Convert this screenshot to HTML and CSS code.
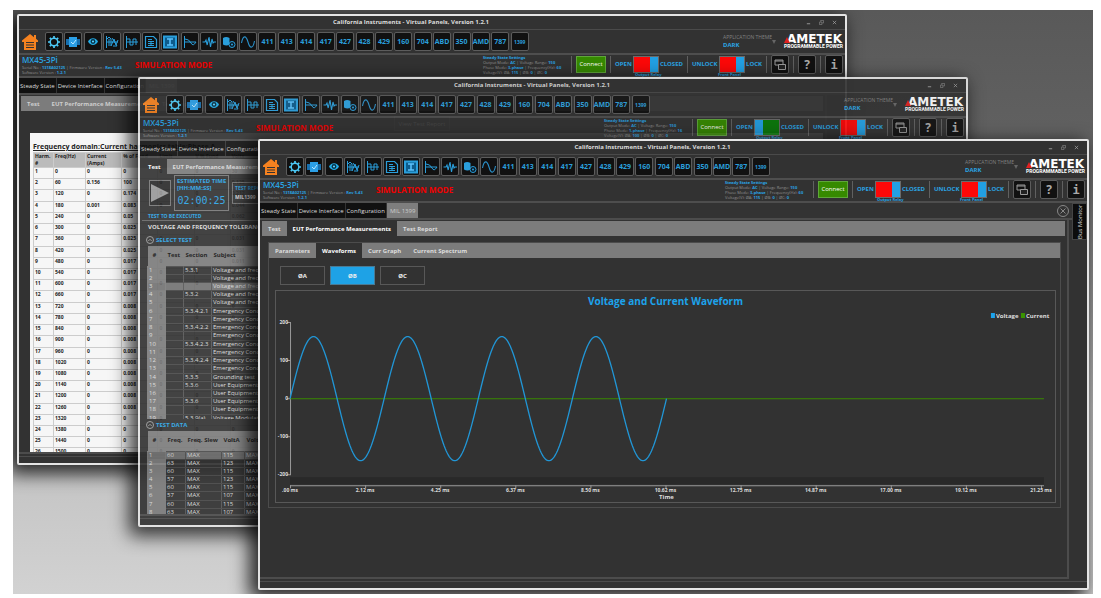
FILE: index.html
```html
<!DOCTYPE html>
<html lang="en">
<head>
  <meta charset="UTF-8">
  <meta name="viewport" content="width=device-width, initial-scale=1.0">
  <title>California Instruments - Virtual Panels</title>
  <link rel="stylesheet" href="styles.css">
</head>
<body>
  <!-- Icons -->
  <svg class="sprite" xmlns="http://www.w3.org/2000/svg">
    <symbol id="i-home" viewBox="0 0 18 18"><path d="M9 1 1 7.500V9h2v8h12V9h2V7.500L15 5.800V2h-2v2.200z" fill="#f58220"/><path d="M5 9.500h8M5 12h8M5 14.500h8" stroke="#333" stroke-width="1"/></symbol>
    <symbol id="i-gear" viewBox="0 0 16 16"><circle cx="8" cy="8" r="3.800" fill="none" stroke="#4cc8f5" stroke-width="1.500"/><path d="M8 2v2M8 12v2M2 8h2M12 8h2M3.800 3.800l1.400 1.400M10.800 10.800l1.400 1.400M12.200 3.800l-1.400 1.400M5.200 10.800l-1.400 1.400" stroke="#4cc8f5" stroke-width="1.700"/></symbol>
    <symbol id="i-chip" viewBox="0 0 16 16"><path d="M1 5h14v6H1z" fill="#176fae"/><path d="M4 3h8v10H4z" fill="#2b9fe6"/><path d="M6 8l2 2 3-4" fill="none" stroke="#b8e6ff"/></symbol>
    <symbol id="i-eye" viewBox="0 0 16 16"><path d="M3 7.500C5 3 11 3 13 7.500 11 12 5 12 3 7.500z" fill="#25aee8"/><circle cx="8" cy="7.500" r="2.400" fill="#073246"/><circle cx="8" cy="7.500" r="1.100" fill="#5ad0ff"/></symbol>
    <symbol id="i-multi" viewBox="0 0 16 16"><path d="M2.500 2v12M2 8h12M3 5l2-2 2 2v7l3-7 2 6 2-5M5 12V5M8 4l5 8M9 12h4" fill="none" stroke="#2a9fdc"/></symbol>
    <symbol id="i-step" viewBox="0 0 16 16"><path d="M2.500 2v12M2 8h12M3 5h3v6h3V5h3v6" fill="none" stroke="#2a9fdc"/></symbol>
    <symbol id="i-doc" viewBox="0 0 16 16"><path d="M2.500 2.500h8l3 3v8h-11z" fill="none" stroke="#2a9fdc" stroke-width="1.200"/><path d="M5 5.500h4M5 7.500h6M5 9.500h6M5 11.500h6M8 7v5" stroke="#2a9fdc"/></symbol>
    <symbol id="i-beam" viewBox="0 0 16 16"><path d="M2 2.500h12v11H2z" fill="#0d5c8c" stroke="#2a9fdc" stroke-width="2"/><path d="M5 5h6M8 5v6M5 11h6" stroke="#5cc4ff" stroke-width="1.500"/></symbol>
    <symbol id="i-decay" viewBox="0 0 16 16"><path d="M2.500 2v12M2 8h12M3 5q4 0 6 4t5-1" fill="none" stroke="#2a9fdc"/></symbol>
    <symbol id="i-pulse" viewBox="0 0 16 16"><path d="M1.500 8H4l1-2 1.200 5L8 3l1.500 10L11 5l1 4 1-1h2" fill="none" stroke="#2a9fdc" stroke-width="1.100"/></symbol>
    <symbol id="i-data" viewBox="0 0 16 16"><path d="M2 4q3-2 6.500 0v6.500q-3 2-6.500 0z" fill="#2a9fdc"/><circle cx="11" cy="10.500" r="3" fill="#0a1a24" stroke="#2a9fdc"/><circle cx="11" cy="10.500" r="1" fill="#2a9fdc"/></symbol>
    <symbol id="i-sine" viewBox="0 0 16 16"><path d="M1.500 9C3 1 6 1 8 8s5 7 6.500-1" fill="none" stroke="#2a8fc8" stroke-width="1.100"/></symbol>
    <symbol id="i-windows" viewBox="0 0 16 16"><path d="M3 3h8v5H3zM3 4h8" fill="none" stroke="#999"/><path d="M6.500 7.500h7v5h-7z" fill="#222" stroke="#999"/></symbol>
  </svg>

  <!-- Header shared by every panel window -->
  <template id="windowHeader">
    <div class="title-bar">
      <span class="title">California Instruments - Virtual Panels, Version 1.2.1</span>
      <div class="window-buttons">
        <button aria-label="Minimize"><svg viewBox="0 0 6 6"><path d="M1 4.500h4" stroke="#aaa"/></svg></button>
        <button aria-label="Restore"><svg viewBox="0 0 6 6"><path d="M.5 2.500h3v3h-3zM2 2V.5h3.500v3H4" fill="none" stroke="#888" stroke-width=".8"/></svg></button>
        <button aria-label="Close"><svg viewBox="0 0 6 6"><path d="M1 1l4 4M5 1L1 5" stroke="#aaa" stroke-width=".8"/></svg></button>
      </div>
    </div>
    <div class="toolbar">
      <a href="#" class="home" aria-label="Home"><svg><use href="#i-home"/></svg></a>
      <div class="tools"></div>
      <label class="theme">APPLICATION THEME
        <select><option>DARK</option></select>
      </label>
      <svg class="caret" viewBox="0 0 6 6"><path d="M1 1h4L3 5z" fill="#666"/></svg>
      <div class="logo">
        <svg viewBox="0 0 6 8"><path d="M0 8l3-6 3 6z" fill="#e02020"/></svg>
        <b>AMETEK</b>
        <span>PROGRAMMABLE POWER</span>
      </div>
    </div>
    <div class="status">
      <div class="device">
        <strong>MX45-3Pi</strong>
        <p>Serial No : <b>1318A02125</b> | Firmware Version : <b>Rev 5.43</b></p>
        <p>Software Version : <b>1.2.1</b></p>
      </div>
      <div class="mode">SIMULATION MODE</div>
      <div class="settings">
        <p><b>Steady State Settings</b></p>
        <p>Output Mode: <b>AC</b> | Voltage Range: <b>150</b></p>
        <p>Phase Mode: <b class="phase"></b> | Frequency(Hz): <b class="freq"></b></p>
        <p>Voltage(V): ØA: <b class="volt"></b> | ØB: <b>0</b> | ØC: <b>0</b></p>
      </div>
      <i class="sep"></i>
      <button class="connect">Connect</button>
      <i class="sep"></i>
      <label class="switch"><span>OPEN</span><input type="checkbox" class="relay" checked><span>CLOSED</span><small>Output Relay</small></label>
      <i class="sep"></i>
      <label class="switch lock"><span>UNLOCK</span><input type="checkbox" checked><span>LOCK</span><small>Front Panel</small></label>
      <i class="sep"></i>
      <button class="tool" aria-label="Windows"><svg><use href="#i-windows"/></svg></button>
      <i class="sep"></i>
      <button class="tool help">?</button>
      <i class="sep"></i>
      <button class="tool help info">i</button>
    </div>
  </template>

  <main class="desktop">
    <!-- Test report window -->
    <section class="window report-window" data-phase="3-phase" data-freq="60" data-volt="115" data-relay="closed">
      <div class="main-tabs">
        <button>Steady State</button><button>Device Interface</button><button>Configuration</button><button class="active">MIL 1399</button>
      </div>
      <div class="body">
        <div class="panel">
          <div class="tabs plain"><button>Test</button><button>EUT Performance Measurements</button><button>Test Report</button></div>
          <div class="view-row"><button>View Test Report</button></div>
          <div class="report">
            <h2>Frequency domain:Current harmonics table:Phase A</h2>
            <table id="harmonics">
              <thead><tr><th>Harm.<br>#</th><th>Freq(Hz)</th><th>Current<br>(Amps)</th><th>% of Fund</th><th>Limit</th><th>V % Fund</th><th>Volts</th></tr></thead>
              <tbody></tbody>
            </table>
          </div>
        </div>
      </div>
    </section>

    <!-- Test selection window -->
    <section class="window test-window" data-phase="1-phase" data-freq="16" data-volt="100" data-relay="open">
      <div class="main-tabs">
        <button>Steady State</button><button>Device Interface</button><button>Configuration</button><button class="active">MIL 1399</button>
      </div>
      <div class="body">
        <div class="panel">
          <div class="tabs"><button class="active">Test</button><button>EUT Performance Measurements</button><button>Test Report</button></div>
          <div class="run-row">
            <button class="play" aria-label="Run test"><svg viewBox="0 0 18 18"><path d="M0 0l18 9-18 9z" fill="#999"/></svg></button>
            <div class="estimate">
              <p>ESTIMATED TIME<br>[HH:MM:SS]</p>
              <time>02:00:25</time>
            </div>
            <label class="report-name">TEST REPORT NAME <input type="text" value="MIL1399"></label>
          </div>
          <p class="caption">TEST TO BE EXECUTED</p>
          <p class="test-name">VOLTAGE AND FREQUENCY TOLERANCE</p>
          <h3><button aria-label="Collapse"><svg viewBox="0 0 8 8"><circle cx="4" cy="4" r="3.500"/><path d="M2.300 5L4 3.300 5.700 5"/></svg></button>SELECT TEST</h3>
          <div class="scroll select-scroll">
            <table id="tests">
              <thead><tr><th>#</th><th>Test</th><th>Section</th><th>Subject</th></tr></thead>
              <tbody></tbody>
            </table>
          </div>
          <h3><button aria-label="Collapse"><svg viewBox="0 0 8 8"><circle cx="4" cy="4" r="3.500"/><path d="M2.300 5L4 3.300 5.700 5"/></svg></button>TEST DATA</h3>
          <div class="scroll data-scroll">
            <table id="testData">
              <thead><tr><th>#</th><th>Freq.</th><th>Freq. Slew</th><th>VoltA</th><th>Volt Slew</th></tr></thead>
              <tbody></tbody>
            </table>
          </div>
        </div>
      </div>
    </section>

    <!-- Waveform window -->
    <section class="window wave-window" data-phase="3-phase" data-freq="60" data-volt="115" data-relay="closed">
      <div class="main-tabs">
        <button>Steady State</button><button>Device Interface</button><button>Configuration</button><button class="active">MIL 1399</button>
        <button class="close-tab" aria-label="Close tab"><svg viewBox="0 0 12 12"><circle cx="6" cy="6" r="5.500"/><path d="M3.500 3.500l5 5M8.500 3.500l-5 5"/></svg></button>
      </div>
      <div class="body">
        <div class="panel">
          <div class="tabs"><button>Test</button><button class="active">EUT Performance Measurements</button><button>Test Report</button></div>
          <div class="measure">
            <div class="tabs"><button>Parameters</button><button class="active">Waveforms</button><button>Curr Graph</button><button>Current Spectrum</button></div>
            <div class="phases"><button>ØA</button><button class="active">ØB</button><button>ØC</button></div>
            <div class="chart">
              <svg id="chart" viewBox="0 0 778 211">
                <text class="chart-title" x="389" y="14">Voltage and Current Waveform</text>
                <g class="legend">
                  <rect x="714" y="22" width="4" height="5" fill="#1ca3ec"/><text x="719" y="27">Voltage</text>
                  <rect x="744" y="22" width="4" height="5" fill="#3a9400"/><text x="749" y="27">Current</text>
                </g>
                <rect x="14" y="186" width="753" height="7" fill="#292929"/>
                <g id="axes"></g>
                <path class="current" d="M14 107.500H767"/>
                <path class="voltage" id="voltage"/>
                <text class="axis-title" x="390" y="208">Time</text>
              </svg>
            </div>
          </div>
        </div>
      </div>
      <button class="bus-monitor">Bus Monitor</button>
    </section>
  </main>

  <script src="script.js"></script>
</body>
</html>
```

FILE: styles.css
```css
* {
  box-sizing: border-box;
}
body {
  margin: 0;
  background: #fff;
  color: #ddd;
  font-family: "Open Sans", "Noto Sans", sans-serif;
  font-size: 6px;
  line-height: 8px;
}
button, input, select {
  font: inherit;
  color: inherit;
  margin: 0;
  padding: 0;
  border: none;
  background: none;
}
p, h2, h3 {
  margin: 0;
}
.sprite {
  display: none;
}
.desktop {
  position: relative;
  height: calc(100vh - 14px);
  min-height: 400px;
  margin: 10px 8px 4px 13px;
  overflow: hidden;
  background: linear-gradient(#595959, #606060 20%, #8c8c8c 42%, #bdbdbd 68%, #d2d2d2);
}
/* Windows */
.window {
  position: absolute;
  display: flex;
  flex-direction: column;
  background: #323232;
  border: 2px solid #e4e4e4;
  border-radius: 2px;
  box-shadow: -6px 6px 18px 3px rgba(0, 0, 0, 0.8);
  overflow: hidden;
}
.report-window {
  inset: 4px 246px 129px 4px;
}
.test-window {
  inset: 67px 125px 67px 125px;
  opacity: 0.91;
}
.wave-window {
  inset: 129px 4px 4px 245px;
}
.title-bar {
  display: flex;
  justify-content: center;
  position: relative;
  height: 14px;
  padding: 2px 42px 0 0;
  border-bottom: 1px solid #4a4a4a;
  font-weight: bold;
}
.window-buttons {
  position: absolute;
  right: 8px;
  top: 4px;
  display: flex;
  gap: 8px;
}
.window-buttons button, .window-buttons svg {
  display: block;
  width: 5px;
  height: 5px;
}
.toolbar {
  display: flex;
  align-items: center;
  height: 25px;
  padding-right: 1px;
  border-bottom: 2px solid #4e4e4e;
}
.home {
  margin: 0 6px 0 2px;
}
.home svg {
  display: block;
  width: 18px;
  height: 18px;
}
.tools {
  display: flex;
  justify-content: space-between;
  width: 484px;
}
.tool {
  display: flex;
  align-items: center;
  justify-content: center;
  flex: none;
  width: 18px;
  height: 19px;
  border: 1px solid #5c5c5c;
  border-radius: 2px;
  background: #111;
  color: #2a9fdc;
  font: bold 7px "Open Sans", sans-serif;
}
.tool svg {
  flex: none;
  width: 16px;
  height: 16px;
}
.tool.small {
  font-size: 5px;
}
.theme {
  margin-left: auto;
  width: 44px;
  color: #808080;
  font-size: 5px;
  line-height: 7px;
  white-space: nowrap;
}
.theme select {
  display: block;
  appearance: none;
  color: #2aa4e4;
  font-size: 6px;
  font-weight: bold;
  line-height: 9px;
}
.caret {
  width: 6px;
  height: 6px;
  margin: 0 7px 0 4px;
}
.logo {
  position: relative;
  width: 60px;
  color: #fff;
}
.logo svg {
  position: absolute;
  left: 0;
  top: 1px;
  width: 6px;
  height: 8px;
}
.logo b {
  display: block;
  padding-left: 3px;
  font: bold 12px/10px "DejaVu Sans", sans-serif;
}
.logo span {
  display: block;
  font: bold 5px/5px Roboto, sans-serif;
  white-space: nowrap;
}
.status {
  display: flex;
  align-items: center;
  gap: 4px;
  height: 23px;
  padding: 0 2px 2px 3px;
  border-bottom: 2px solid #4e4e4e;
  color: #909090;
  font-size: 4px;
  line-height: 5px;
}
.status b {
  color: #2aa4e4;
}
.device {
  width: 109px;
  white-space: nowrap;
}
.device strong {
  display: block;
  color: #2aa4e4;
  font-size: 8px;
  font-weight: 600;
  line-height: 10px;
}
.mode {
  color: #f00000;
  font-size: 8px;
  font-weight: bold;
}
.settings {
  margin-left: auto;
  width: 84px;
  white-space: nowrap;
}
.sep {
  width: 1px;
  height: 17px;
  background: #606060;
}
.connect {
  width: 30px;
  height: 17px;
  border: 1px solid #5fa63a;
  background: #368a00;
  color: #fff;
  font-size: 6px;
}
.switch {
  position: relative;
  display: flex;
  align-items: center;
  justify-content: space-between;
  width: 68px;
  color: #2aa4e4;
  font-size: 6px;
  font-weight: bold;
}
.switch.lock {
  width: 70px;
}
.switch input {
  appearance: none;
  width: 26px;
  height: 17px;
  border: 1px solid #6a6a6a;
  background: linear-gradient(to right, #22a0e4 8px, #0a7a0a 8px);
}
.switch input:checked {
  background: linear-gradient(to right, #fd0808 16px, #22a0e4 16px);
}
.switch small {
  position: absolute;
  left: 20px;
  top: 17px;
  font-size: 4px;
  line-height: 4px;
}
.switch.lock small {
  left: 26px;
}
.help {
  color: #aaa;
  font-size: 12px;
}
.info {
  font-family: "DejaVu Sans Mono", monospace;
}
/* Tabs */
.main-tabs {
  display: flex;
  gap: 1px;
  height: 17px;
  border-bottom: 2px solid #4c4c4c;
  background: #333;
  font-size: 6px;
}
.main-tabs button {
  padding: 0 1px;
  background: #111;
}
.main-tabs .active {
  padding: 0 3px;
  background: #7e7e7e;
  color: #ccc;
}
.main-tabs .close-tab {
  margin: 1px 18px 0 auto;
  padding: 0;
  background: none;
}
.close-tab svg {
  display: block;
  width: 12px;
  height: 12px;
  fill: none;
  stroke: #888;
}
.body {
  flex: 1;
  min-height: 0;
  margin: 0 18px 2px 0;
  padding: 1px 2px 0;
  border: solid #4c4c4c;
  border-width: 0 2px 2px 0;
}
.window::after {
  content: "";
  height: 6px;
  border-top: 1px solid #4c4c4c;
}
.panel {
  height: 100%;
  overflow: hidden;
}
.tabs {
  display: flex;
  height: 15px;
  background: #7c7c7c;
  font-weight: bold;
}
.tabs button {
  padding: 0 6px;
}
.tabs .active {
  background: #323232;
  color: #fff;
}
.bus-monitor {
  position: absolute;
  right: 0;
  top: 62px;
  width: 15px;
  height: 37px;
  border: 1px solid #444;
  background: #0c0c0c;
  writing-mode: vertical-rl;
  transform: rotate(180deg);
  font-size: 6px;
}
/* Waveforms */
.measure {
  margin: 6px 4px 0 6px;
  padding-bottom: 4px;
  border: 1px solid #4c4c4c;
}
.phases {
  display: flex;
  gap: 5px;
  margin: 8px 11px 5px;
}
.phases button {
  width: 45px;
  height: 19px;
  border: 1px solid #585858;
  color: #eee;
  font-weight: bold;
}
.phases .active {
  background: #1ea2e6;
  border-color: #4a7a94;
}
.chart {
  margin: 0 4px 0 6px;
  border: 1px solid #585858;
}
.chart svg {
  display: block;
  width: 100%;
}
.chart text {
  fill: #ddd;
}
.chart .chart-title {
  fill: #1ca3ec;
  font-size: 10px;
  font-weight: bold;
  text-anchor: middle;
}
.legend {
  font-size: 6px;
  font-weight: bold;
}
#axes {
  font-size: 5px;
  font-weight: bold;
}
#axes path {
  fill: none;
  stroke: #999;
}
.axis-title {
  font-weight: bold;
  text-anchor: middle;
}
.current {
  fill: none;
  stroke: #3a8a00;
}
.voltage {
  fill: none;
  stroke: #2196d6;
  stroke-width: 1.3;
}
/* Test report */
.plain {
  color: #ccc;
}
.view-row {
  display: flex;
  justify-content: center;
  height: 22px;
  padding: 5px 0 2px;
}
.view-row button {
  padding: 0 4px;
  border: 1px solid #555;
}
.report {
  height: 100%;
  margin-left: 9px;
  padding: 10px 0 0 3px;
  background: #f6f6f6;
  color: #222;
}
.report h2 {
  font-size: 7px;
  line-height: 8px;
  text-decoration: underline;
  white-space: nowrap;
}
table {
  border-collapse: collapse;
  table-layout: fixed;
}
th, td {
  padding: 0 2px;
  text-align: left;
  vertical-align: top;
  white-space: nowrap;
  overflow: hidden;
}
#harmonics {
  width: 234px;
  height: 308px;
  margin-top: 1px;
  font-size: 5px;
  font-weight: bold;
  line-height: 7px;
}
#harmonics th, #harmonics td {
  padding: 0 1px;
  border: 1px solid #ccc;
}
#harmonics th {
  background: #bbb;
}
#harmonics th:nth-child(1) {
  width: 20px;
}
#harmonics th:nth-child(2) {
  width: 32px;
}
/* Test selection */
.run-row {
  display: flex;
  align-items: center;
  gap: 3px;
  height: 38px;
  padding-left: 7px;
}
.play {
  display: flex;
  align-items: center;
  justify-content: center;
  width: 22px;
  height: 26px;
  border: 1px solid #777;
  background: #2a2a2a;
}
.play svg {
  width: 18px;
  height: 18px;
}
.estimate {
  width: 55px;
  height: 36px;
  padding: 2px;
  border: 1px solid #777;
  color: #2aa4e4;
  font-weight: bold;
  line-height: 7px;
  white-space: nowrap;
}
.estimate time {
  display: block;
  font: 10px/18px "DejaVu Sans Mono", monospace;
  text-align: center;
}
.report-name {
  width: 80px;
  padding: 1px 2px;
  border: 1px solid #777;
  color: #2aa4e4;
  font-size: 5px;
  font-weight: bold;
}
.report-name input {
  display: block;
  width: 70px;
  height: 10px;
  background: #333;
  color: #ddd;
}
.caption {
  padding-left: 6px;
  border-bottom: 1px solid #666;
  color: #2aa4e4;
  font-size: 5px;
  font-weight: bold;
}
.test-name {
  padding: 2px 6px 3px;
  font-weight: bold;
}
.panel h3 {
  display: flex;
  align-items: center;
  gap: 2px;
  height: 12px;
  padding-left: 4px;
  color: #2aa4e4;
  font-size: 6px;
}
.panel h3 svg {
  display: block;
  width: 8px;
  height: 8px;
  fill: none;
  stroke: #999;
}
.scroll {
  margin-left: 5px;
  overflow: hidden;
}
.select-scroll {
  height: 173px;
}
.data-scroll {
  height: 84px;
}
.scroll table {
  width: 320px;
  font-size: 6px;
  line-height: 7px;
}
#tests {
  height: 177px;
}
#testData {
  height: 86px;
}
.scroll th {
  height: 20px;
  background: #7c7c7c;
  color: #111;
  vertical-align: middle;
}
.scroll td {
  padding: 0 1px;
  border: 1px solid #555;
  border-top-color: #484848;
  border-bottom-color: #484848;
}
.scroll td:first-child {
  background: #7c7c7c;
  border-color: #7c7c7c;
}
.scroll th:first-child, #tests th:nth-child(2) {
  width: 18px;
}
.scroll th:first-child {
  padding-left: 5px;
}
#tests th:nth-child(3) {
  width: 28px;
}
#testData th:nth-child(2) {
  width: 20px;
}
#testData th:nth-child(3) {
  width: 36px;
}
#testData th:nth-child(4) {
  width: 23px;
}
.scroll .selected td {
  background: #737373;
}
```

FILE: script.js
```js
const icons = ['gear', 'chip', 'eye', 'multi', 'step', 'doc', 'beam', 'decay', 'pulse', 'data', 'sine'];
const standards = ['411', '413', '414', '417', '427', '428', '429', '160', '704', 'ABD', '350', 'AMD', '787', '1399'];

// Put the header into each window
const header = document.getElementById('windowHeader');
document.querySelectorAll('.window').forEach(function(win) {
  const node = header.content.cloneNode(true);
  node.querySelector('.tools').innerHTML =
    icons.map(name => `<button class="tool" aria-label="${name}"><svg><use href="#i-${name}"/></svg></button>`).join('') +
    standards.map(name => `<button class="tool${name.length > 3 ? ' small' : ''}">${name}</button>`).join('');
  node.querySelector('.phase').textContent = win.dataset.phase;
  node.querySelector('.freq').textContent = win.dataset.freq;
  node.querySelector('.volt').textContent = win.dataset.volt;
  node.querySelector('.relay').checked = win.dataset.relay === 'closed';
  win.prepend(node);
});

function fillTable(id, rows, selected) {
  document.querySelector(`#${id} tbody`).innerHTML = rows.map((row, i) =>
    `<tr${i === selected ? ' class="selected"' : ''}>` + row.map(cell => `<td>${cell}</td>`).join('') + '</tr>'
  ).join('');
}

// Harmonics of the 60 Hz fundamental
const percent = ['0', '100', '0.174', '0.083', '0.05', '0.025', '0.025', '0.025', '0.017', '0.017', '0.017', '0.017',
  '0.008', '0.008', '0.008', '0.008', '0.008', '0.008', '0.008', '0.008', '0.008', '0.008', '0', '0', '0', '0'];
const volts = ['30', '0.125', '0.212', '0.044', '0.062', '0.031', '0.031', '0.031', '0.011'];
const amps = { 1: '0.156', 3: '0.001' };
fillTable('harmonics', percent.map((p, i) => [i + 1, i * 60, amps[i] || '0', p, '0', '0', volts[i] || '0']));

const tolerance = 'Voltage and frequency tolerance';
const emergency = 'Emergency Condition';
const equipment = 'User Equipment';
fillTable('tests', [
  ['5.3.1', tolerance], ['', tolerance], ['', tolerance], ['5.3.2', tolerance], ['', tolerance],
  ['5.3.4.2.1', emergency], ['', emergency], ['5.3.4.2.2', emergency], ['', emergency],
  ['5.3.4.2.3', emergency], ['', emergency], ['5.3.4.2.4', emergency], ['', emergency],
  ['5.3.5', 'Grounding test'], ['5.3.6', equipment], ['', equipment], ['5.3.6', equipment], ['', equipment],
  ['5.3.9(a)', 'Voltage Modulation']
].map((row, i) => [i + 1, '', row[0], row[1]]), 2);

fillTable('testData', [[60, 115], [63, 123], [60, 115], [57, 123], [60, 115], [57, 107], [60, 115], [63, 107]]
  .map((row, i) => [i + 1, row[0], 'MAX', row[1], 'MAX']), 0);

// Chart axes
let axes = '<path d="M11 31.5H14.5V183.5H11M11 69.5H14M11 107.5H14M11 145.5H14M14 194.5H767"/>';
[200, 100, 0, -100, -200].forEach(function(value, i) {
  axes += `<text x="12" y="${33 + i * 38}" text-anchor="end">${value}</text>`;
});
['.00', '2.12', '4.25', '6.37', '8.50', '10.62', '12.75', '14.87', '17.00', '19.12', '21.25'].forEach(function(time, i) {
  axes += `<path d="M${14 + i * 75}.5 194V197"/><text x="${14 + i * 75}" y="201" text-anchor="middle">${time} ms</text>`;
});
document.getElementById('axes').innerHTML = axes;

// Four cycles of voltage
let points = [];
for (let x = 0; x <= 376; x++) {
  points.push(`${x + 14} ${(107.5 - 62 * Math.sin(x / 376 * 8 * Math.PI)).toFixed(2)}`);
}
document.getElementById('voltage').setAttribute('d', 'M' + points.join('L'));
```
